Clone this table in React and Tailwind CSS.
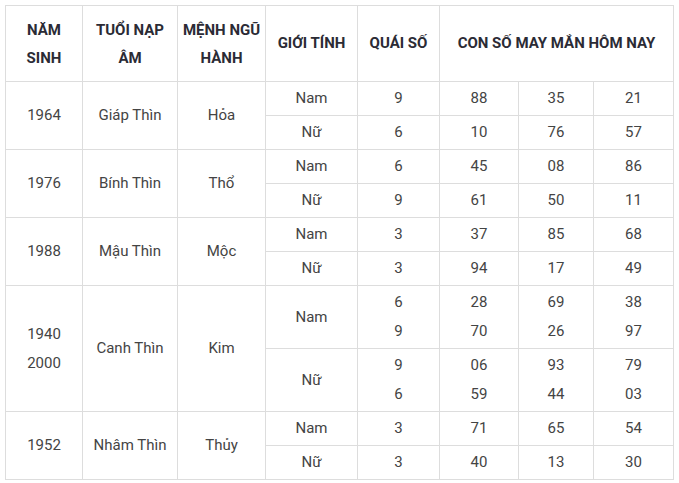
import React from "react";

const rows = [
  { year: ["1964"], tuoi: "Giáp Thìn", menh: "Hỏa", h: "h-[34px]", sub: [
    { g: "Nam", q: ["9"], n: [["88"], ["35"], ["21"]] },
    { g: "Nữ", q: ["6"], n: [["10"], ["76"], ["57"]] },
  ]},
  { year: ["1976"], tuoi: "Bính Thìn", menh: "Thổ", h: "h-[34px]", sub: [
    { g: "Nam", q: ["6"], n: [["45"], ["08"], ["86"]] },
    { g: "Nữ", q: ["9"], n: [["61"], ["50"], ["11"]] },
  ]},
  { year: ["1988"], tuoi: "Mậu Thìn", menh: "Mộc", h: "h-[34px]", sub: [
    { g: "Nam", q: ["3"], n: [["37"], ["85"], ["68"]] },
    { g: "Nữ", q: ["3"], n: [["94"], ["17"], ["49"]] },
  ]},
  { year: ["1940", "2000"], tuoi: "Canh Thìn", menh: "Kim", h: "h-[63px]", sub: [
    { g: "Nam", q: ["6", "9"], n: [["28", "70"], ["69", "26"], ["38", "97"]] },
    { g: "Nữ", q: ["9", "6"], n: [["06", "59"], ["93", "44"], ["79", "03"]] },
  ]},
  { year: ["1952"], tuoi: "Nhâm Thìn", menh: "Thủy", h: "h-[34px]", sub: [
    { g: "Nam", q: ["3"], n: [["71"], ["65"], ["54"]] },
    { g: "Nữ", q: ["3"], n: [["40"], ["13"], ["30"]] },
  ]},
];

const td = "border border-[#dddddd] text-center align-middle p-0";

function Lines({ items }) {
  return items.map((t, i) => (
    <div key={i} className="leading-[29px]">{t}</div>
  ));
}

export default function App() {
  return (
    <div className="bg-white w-[679px] h-[483px] pt-[5px] pl-[5px]" style={{ fontFamily: "Roboto, 'Liberation Sans', sans-serif" }}>
      <table className="table-fixed border-collapse w-[668px] text-[15px] text-[#444444]">
        <colgroup>
          <col className="w-[77px]" />
          <col className="w-[95px]" />
          <col className="w-[88px]" />
          <col className="w-[92px]" />
          <col className="w-[82px]" />
          <col className="w-[79px]" />
          <col className="w-[75px]" />
          <col className="w-[80px]" />
        </colgroup>
        <thead>
          <tr className="h-[76px] font-bold text-[#2b2b35]">
            <th className={td}><div className="leading-[28px]">NĂM<br />SINH</div></th>
            <th className={td}><div className="leading-[28px]">TUỔI NẠP<br />ÂM</div></th>
            <th className={td}><div className="leading-[28px]">MỆNH NGŨ<br />HÀNH</div></th>
            <th className={td}>GIỚI TÍNH</th>
            <th className={td}>QUÁI SỐ</th>
            <th className={td} colSpan={3}>CON SỐ MAY MẮN HÔM NAY</th>
          </tr>
        </thead>
        <tbody>
          {rows.map((r, ri) =>
            r.sub.map((s, si) => (
              <tr key={ri + "-" + si} className={r.h}>
                {si === 0 && (
                  <>
                    <td className={td} rowSpan={2}><Lines items={r.year} /></td>
                    <td className={td} rowSpan={2}>{r.tuoi}</td>
                    <td className={td} rowSpan={2}>{r.menh}</td>
                  </>
                )}
                <td className={td}>{s.g}</td>
                <td className={td}><Lines items={s.q} /></td>
                {s.n.map((c, ci) => (
                  <td key={ci} className={td}><Lines items={c} /></td>
                ))}
              </tr>
            ))
          )}
        </tbody>
      </table>
    </div>
  );
}
